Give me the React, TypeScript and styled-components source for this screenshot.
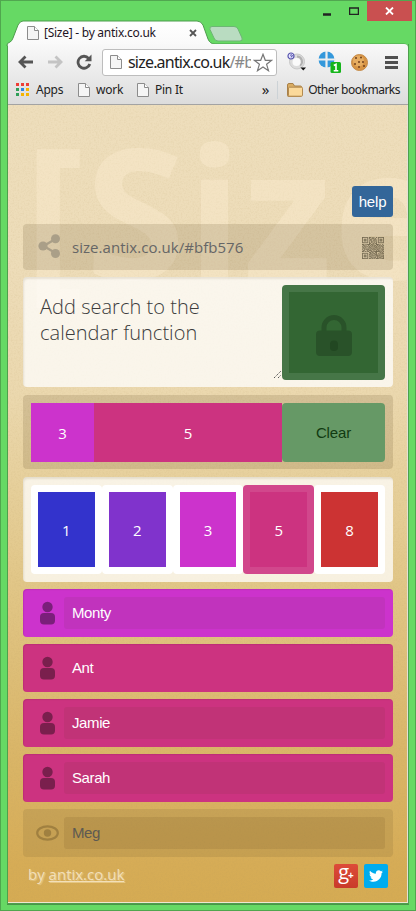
import React from "react";
import styled, { createGlobalStyle, css } from "styled-components";
import { FaTwitter } from "react-icons/fa";

const GlobalStyle = createGlobalStyle`
  * { box-sizing: border-box; }
  body { margin: 0; overflow: hidden; }
  svg { display: block; flex: none; }
`;

const openSans = `"Open Sans", "Noto Sans", sans-serif`;
const arial = `"Liberation Sans", Arial, sans-serif`;
const chromeFont = `"Noto Sans", "Open Sans", sans-serif`;

/* ---------- browser window ---------- */

const Window = styled.div`
  width: 416px;
  height: 911px;
  background: #66d964;
  border: 1px solid #50a64e;
  border-top-color: #51a750;
  display: flex;
  flex-direction: column;
  padding: 0 6px 6px;
  overflow: hidden;
`;

const TitleBar = styled.header`
  height: 43px;
  flex: none;
  display: flex;
  align-items: flex-start;
  position: relative;
`;

const TabShape = styled.svg`
  position: absolute;
  left: -1px;
  top: 17px;
`;

const TabContent = styled.div`
  position: relative;
  display: flex;
  align-items: center;
  width: 194px;
  height: 20px;
  margin: 22px 0 0 20px;
`;

const TabTitle = styled.span`
  font: 12px/20px ${chromeFont};
  letter-spacing: -0.26px;
  color: #1d1424;
  margin-left: 5px;
  flex: 1;
  white-space: nowrap;
`;

const TabClose = styled.span`
  width: 8px;
  margin-right: 24px;
`;

const WindowControls = styled.div`
  margin-left: auto;
  display: flex;
  margin-right: -3px;
`;

const ControlButton = styled.div<{ $width: number; $danger?: boolean }>`
  width: ${(p) => p.$width}px;
  height: 20px;
  display: grid;
  place-items: center;
  background: ${(p) => (p.$danger ? "#c95050" : "transparent")};
`;

const Frame = styled.div`
  width: 402px;
  flex: 1;
  min-height: 0;
  display: flex;
  flex-direction: column;
  border: 1px solid #4f9f4d;
  border-top: 0;
  box-shadow: 0 1px 0 #4a9548;
`;

const Toolbar = styled.div`
  height: 35px;
  flex: none;
  display: flex;
  align-items: center;
  background: linear-gradient(#f9f9f9, #e8e8e8);
  padding: 1px 9px 0 10px;
  border-radius: 0 4px 0 0;
  position: relative;
`;

const NavGroup = styled.div`
  display: flex;
  align-items: center;
  gap: 13px;
  width: 84px;
`;

const Omnibox = styled.div`
  width: 175px;
  height: 27px;
  background: #fff;
  border: 1px solid #bdbdbd;
  border-radius: 3px;
  display: flex;
  align-items: center;
  padding: 0 3px 0 7px;
`;

const Address = styled.div`
  flex: 1;
  width: 0;
  overflow: hidden;
  white-space: nowrap;
  margin-left: 6px;
  margin-right: 2px;
  font: 16px/24px ${chromeFont};
  letter-spacing: -0.8px;
  color: #222;
`;

const AddressRest = styled.span`
  color: #888;
`;

const Extensions = styled.div`
  display: flex;
  align-items: center;
  margin-left: 10px;
  gap: 12px;
`;

const CookieSlot = styled.div`
  margin-left: 9px;
`;

const MenuButton = styled.div`
  margin-left: auto;
  margin-right: 1px;
`;

const Bookmarks = styled.div`
  height: 26px;
  flex: none;
  display: flex;
  align-items: center;
  background: linear-gradient(#e8e8e8, #dcdcdc);
  border-bottom: 1px solid #a3a3a3;
  padding: 0 8px 3px 8px;
  font: 12px/18px ${chromeFont};
  letter-spacing: -0.25px;
  color: #222;
`;

const Bookmark = styled.div<{ $width: number }>`
  width: ${(p) => p.$width}px;
  display: flex;
  align-items: center;
  gap: 6px;
  white-space: nowrap;
`;

const Overflow = styled.span`
  font-size: 15px;
  line-height: 14px;
  margin-left: auto;
  margin-top: -3px;
  padding-right: 8px;
`;

const OtherBookmarks = styled.div`
  display: flex;
  align-items: center;
  gap: 5px;
  border-left: 1px solid #ccd2d6;
  padding-left: 9px;
  white-space: nowrap;
  letter-spacing: -0.5px;
`;

/* ---------- page ---------- */

const Page = styled.main`
  flex: 1;
  min-height: 0;
  position: relative;
  overflow: hidden;
  border-right: 1px solid #e4e0d8;
  border-bottom: 1px solid #efe6d0;
  padding: 81px 15px 0 15px;
  background: linear-gradient(#eedebc 0, #eddcb8 170px, #ebd8ae 290px, #e2c88b 460px, #dab669 640px, #d6ac56 760px, #d5ab53 100%);
`;

const Grain = styled.svg`
  position: absolute;
  inset: 0;
  width: 100%;
  height: 100%;
`;

const Watermark = styled.div`
  position: absolute;
  left: 16px;
  top: -21px;
  font: bold 182px/248px ${openSans};
  letter-spacing: 1.1px;
  color: rgba(255, 240, 214, 0.34);
  white-space: nowrap;
`;

const Stack = styled.div`
  position: relative;
  width: 370px;
  display: flex;
  flex-direction: column;
  gap: 7px;
`;

const HelpButton = styled.button`
  align-self: flex-end;
  width: 41px;
  height: 31px;
  border: 0;
  padding: 0;
  border-radius: 3px;
  background: #336699;
  color: #fff;
  font: 15px/31px ${arial};
  letter-spacing: -0.2px;
`;

const Panel = styled.section<{ $height: number; $light?: boolean; $spaced?: boolean }>`
  height: ${(p) => p.$height}px;
  margin-top: ${(p) => (p.$spaced ? 1 : 0)}px;
  display: flex;
  border-radius: 4px;
  padding: 8px;
  ${(p) =>
    p.$light
      ? css`
          background: rgba(255, 255, 255, 0.74);
          box-shadow: inset 1px 2px 2px rgba(90, 70, 30, 0.12);
        `
      : css`
          background: rgba(68, 51, 17, 0.14);
        `}
`;

const ShareGlyph = styled.div`
  width: 41px;
  padding: 2px 0 0 7px;
`;

const ShareLink = styled.div`
  flex: 1;
  font: 15px/30px ${openSans};
  letter-spacing: 0.04px;
  color: #666;
`;

const QrSlot = styled.div`
  padding: 5px 1px 0 0;
`;

const Story = styled.div`
  flex: 1;
  position: relative;
  margin-left: 9px;
  padding-top: 9px;
  font: 300 20px/26px ${openSans};
  letter-spacing: 0.03px;
  color: #3c3c3c;
  white-space: pre;
`;

const Grip = styled.svg`
  position: absolute;
  right: 0;
  bottom: 0;
`;

const LockButton = styled.button`
  width: 103px;
  height: 95px;
  margin-top: 0;
  padding: 0;
  border: 7px solid #467647;
  border-radius: 4px;
  background: #336633;
  display: grid;
  place-items: center;
`;

const LockSlot = styled.span`
  padding-top: 5px;
`;

const VoteBar = styled.div<{ $width: number; $color: string }>`
  width: ${(p) => p.$width}px;
  height: 59px;
  background: ${(p) => p.$color};
  color: #fff;
  text-align: center;
  font: 15px/60px ${openSans};
`;

const ClearButton = styled.button`
  width: 103px;
  height: 59px;
  padding: 0;
  border: 0;
  border-radius: 4px;
  background: #669966;
  color: #113b11;
  font: 15px/59px ${arial};
  letter-spacing: -0.15px;
`;

const Card = styled.button<{ $color: string; $selected?: boolean }>`
  width: 71px;
  height: 89px;
  padding: 0;
  border: 7px solid ${(p) => (p.$selected ? "#d1478c" : "#fff")};
  border-radius: 4px;
  background: ${(p) => p.$color};
  background-clip: padding-box;
  color: #fff;
  font: 15px/76px ${openSans};
`;

const Voter = styled.div<{ $color: string; $muted?: boolean }>`
  height: 48px;
  display: flex;
  align-items: center;
  padding: 8px 8px 8px 12px;
  border-radius: 4px;
  background: ${(p) => p.$color};
  box-shadow: ${(p) => (p.$muted ? "none" : "inset 1px 1px 1px rgba(80,0,60,.12)")};
`;

const VoterIcon = styled.div`
  width: 29px;
  display: flex;
  padding-left: 1px;
`;

const VoterName = styled.div<{ $shade?: boolean; $muted?: boolean }>`
  flex: 1;
  height: 32px;
  padding-left: 8px;
  border-radius: 3px;
  background: ${(p) => (!p.$shade ? "transparent" : p.$muted ? "rgba(85,51,17,.11)" : "rgba(51,51,0,.07)")};
  color: ${(p) => (p.$muted ? "#5d5a52" : "#fff")};
  font: 15px/32px ${arial};
  letter-spacing: -0.4px;
`;

const Footer = styled.footer`
  display: flex;
  align-items: center;
  height: 24px;
  padding: 0 5px;
  color: #f2dfb9;
  font: 15px/24px ${openSans};
  text-shadow: 1px 1px 1px rgba(255, 240, 200, 0.4);
`;

const Byline = styled.div`
  flex: 1;
  margin-top: -5px;
  a { color: inherit; text-decoration: underline; }
`;

const Social = styled.a<{ $color: string }>`
  width: 24px;
  height: 24px;
  margin-left: 6px;
  border-radius: 2px;
  background: ${(p) => p.$color};
  color: #fff;
  display: flex;
  align-items: center;
  justify-content: center;
  text-shadow: none;
`;

const GooglePlus = styled.span`
  display: flex;
  font: 20px/20px ${openSans};
  margin-top: -5px;
`;

const Plus = styled.span`
  font: bold 10px/20px ${openSans};
  margin: 3px 0 0 -1px;
`;

/* ---------- drawings ---------- */

const PageIcon = () => (
  <svg width="12" height="14" viewBox="0 0 12 14">
    <path d="M.5.5h7l4 4v9H.5z" fill="#f5f5f5" stroke="#8c8c8c" />
    <path d="M7.5.5v4h4" fill="#fff" stroke="#8c8c8c" />
  </svg>
);

const Arrow = ({ color, flip }: { color: string; flip?: boolean }) => (
  <svg width="16" height="14" viewBox="0 0 16 14">
    <path
      d="M7.5 1.5L2 7l5.500 5.500M2 7h13"
      transform={flip ? "translate(16 0) scale(-1 1)" : undefined}
      fill="none"
      stroke={color}
      strokeWidth="2.800"
    />
  </svg>
);

const Reload = () => (
  <svg width="16" height="16" viewBox="0 0 16 16">
    <path d="M12.600 4.300A6 6 0 1 0 13.800 10" fill="none" stroke="#555" strokeWidth="2.800" />
    <path d="M15.500 .5v6.800H8.700z" fill="#555" />
  </svg>
);

const Star = () => (
  <svg width="20" height="19" viewBox="0 0 20 19">
    <path
      d="M10 1.300l2.300 6h6.400l-5.100 4 1.900 6.400-5.500-3.800-5.500 3.800 1.900-6.400-5.100-4h6.400z"
      fill="#fff"
      stroke="#777"
      strokeWidth="1.200"
    />
  </svg>
);

const OrbExtension = () => (
  <svg width="19" height="20" viewBox="0 0 19 20">
    <circle cx="10" cy="9.500" r="7.500" fill="#dcdcdc" stroke="#c8c8c8" />
    <path d="M10 4.500a5 5 0 0 1 3 9" fill="none" stroke="#b2b2b2" strokeWidth="2" />
    <circle cx="9.500" cy="10" r="4" fill="#fafafa" />
    <circle cx="4" cy="4" r="3" fill="#e9e9ff" stroke="#5552ad" strokeWidth="1.200" />
    <path d="M3 3.500q1.200-1.500 2.200-.3T4.200 4.500v1" fill="none" stroke="#4441a5" strokeWidth=".9" />
    <path d="M13.500 15.500h5.500l-2.750 3z" fill="#111" />
  </svg>
);

const TargetExtension = () => (
  <svg width="24" height="24" viewBox="0 0 24 24">
    <circle cx="8.500" cy="9.500" r="8" fill="#3498db" />
    <path d="M8.500 1v18M0 9.500h18" stroke="#eee" strokeWidth="2.200" />
    <rect x="12.500" y="12" width="10.500" height="11" rx="1.500" fill="#16b51b" />
    <path d="M15.800 15.500l2.200-1.200v6.400M15.700 20.700h4.600" fill="none" stroke="#fff" strokeWidth="1.600" />
  </svg>
);

const Cookie = () => (
  <svg width="17" height="17" viewBox="0 0 17 17">
    <circle cx="8.500" cy="8.500" r="8" fill="#d89545" stroke="#c58a48" />
    <circle cx="7.500" cy="7" r="5.500" fill="#e6ad61" />
    {[[5, 4], [10, 3.500], [8, 8], [4, 10], [12, 8], [8, 13], [13, 12]].map(([x, y]) => (
      <circle key={`${x}-${y}`} cx={x} cy={y} r="1" fill="#71411d" />
    ))}
  </svg>
);

const MenuIcon = () => (
  <svg width="13" height="13" viewBox="0 0 13 13">
    <path d="M0 1.500h13M0 6.500h13M0 11.500h13" stroke="#505050" strokeWidth="2.800" />
  </svg>
);

const appColors = ["#ee3e36", "#ee3e36", "#ee3e36", "#2f9e58", "#2d87e2", "#f5b400", "#2f9e58", "#f5b400", "#f5b400"];

const AppsIcon = () => (
  <svg width="14" height="14" viewBox="0 0 14 14">
    {appColors.map((c, i) => (
      <rect key={i} x={(i % 3) * 5} y={Math.floor(i / 3) * 5} width="3" height="3" fill={c} />
    ))}
  </svg>
);

const Folder = () => (
  <svg width="16" height="14" viewBox="0 0 16 14">
    <path d="M.5 12.500V2q0-1.500 1.500-1.500h4L7.500 3h6q1 0 1 1v8.500q0 1-1 1h-12q-1 0-1-1z" fill="#d9ac62" stroke="#a98048" />
    <path d="M1.500 5q0-.8 1-.8h12q1 0 1 1v7q0 1-1 1h-12q-1 0-1-1z" fill="#fbd99a" stroke="#b28a50" />
  </svg>
);

const ShareIcon = () => (
  <svg width="24" height="24" viewBox="0 0 24 24">
    <g fill="#aa9f88">
      <path d="M18 4.800L5.500 12 18 19.200" fill="none" stroke="#aa9f88" strokeWidth="2.400" />
      <circle cx="5" cy="12" r="4.600" />
      <circle cx="17.500" cy="4.800" r="4.500" />
      <circle cx="17.500" cy="19.500" r="4.500" />
    </g>
  </svg>
);

const qrRows = [
  "1111111011010100101111111",
  "1000001010011101001000001",
  "1011101001101011001011101",
  "1011101011100110101011101",
  "1011101000101101001011101",
  "1000001010110010101000001",
  "1111111010101010101111111",
  "0000000011001101100000000",
  "1101011110110100111010010",
  "0110100101011011010110101",
  "1011011010110110101101110",
  "0101100111001011110010011",
  "1110101001110101001111010",
  "0011010110101110110100101",
  "1010111101011011011010111",
  "0110001011100100101101010",
  "1101101100110111111110101",
  "0000000011011001100011010",
  "1111111001101110101010111",
  "1000001011010011100010100",
  "1011101010111101111110011",
  "1011101001010110110101101",
  "1011101011101001011010111",
  "1000001000110111010111001",
  "1111111011011010111010111",
];

const QrCode = () => (
  <svg width="22" height="22" viewBox="0 0 25 25">
    {qrRows.map((row, y) =>
      row.split("").map((bit, x) =>
        bit === "1" ? <rect key={`${x}-${y}`} x={x} y={y} width="1.050" height="1.050" fill="#6a6049" /> : null
      )
    )}
  </svg>
);

const LockIcon = () => (
  <svg width="36" height="41" viewBox="0 0 36 41">
    <path d="M8 17v-4.500a10 10 0 0 1 20 0V17" fill="none" stroke="#295229" strokeWidth="5" />
    <rect x="0" y="15.500" width="36" height="25.500" rx="4" fill="#295229" />
    <rect x="14" y="25.500" width="8" height="10.500" rx="3.800" fill="#224722" />
  </svg>
);

const PersonIcon = ({ color }: { color: string }) => (
  <svg width="23" height="24" viewBox="0 0 23 24">
    <circle cx="11.500" cy="6" r="5.200" fill={color} />
    <rect x="4" y="12" width="15" height="11.500" rx="4" fill={color} />
  </svg>
);

const EyeIcon = () => (
  <svg width="24" height="16" viewBox="0 0 24 16">
    <ellipse cx="11.500" cy="8" rx="10.300" ry="6.700" fill="none" stroke="#a08040" strokeWidth="2.200" />
    <circle cx="11.500" cy="8" r="3.700" fill="#a08040" />
  </svg>
);

/* ---------- data ---------- */

const cards = [
  { value: 1, color: "#3333cc" },
  { value: 2, color: "#8033cc" },
  { value: 3, color: "#cc33cc" },
  { value: 5, color: "#cc3380", selected: true },
  { value: 8, color: "#cc3333" },
];

const voters = [
  { name: "Monty", color: "#cc33cc", icon: "#7a1f7a", shade: true },
  { name: "Ant", color: "#cc3380", icon: "#7a1f4d", shade: false },
  { name: "Jamie", color: "#cc3380", icon: "#7a1f4d", shade: true },
  { name: "Sarah", color: "#cc3380", icon: "#7a1f4d", shade: true },
];

export default function App() {
  return (
    <>
      <GlobalStyle />
      <Window>
        <TitleBar>
          <TabShape width="402" height="28" viewBox="0 0 402 28">
            <defs>
              <linearGradient id="tab" x1="0" y1="0" x2="0" y2="1">
                <stop offset="0" stopColor="#fff" />
                <stop offset="1" stopColor="#f9f9f9" />
              </linearGradient>
            </defs>
            <path d="M206 8.500h22q3 0 4 2.500l4 9q1 3-2 3h-22q-3 0-4-3l-4-8.500q-1-3 2-3z" fill="#b9dcc1" stroke="#6db674" />
            <path d="M1 28v-1q0-2 3-3 2-1 3-4l5-13q2-4 5-4h174q4 0 6 4l5 14q2 5 7 5h189q3 0 3 2z" fill="url(#tab)" stroke="#4d9c4c" />
          </TabShape>
          <TabContent>
            <PageIcon />
            <TabTitle>[Size] - by antix.co.uk</TabTitle>
            <TabClose>
              <svg width="8" height="8" viewBox="0 0 8 8">
                <path d="M1 1l6 6M7 1L1 7" stroke="#555" strokeWidth="1.800" />
              </svg>
            </TabClose>
          </TabContent>
          <WindowControls>
            <ControlButton $width={27}>
              <svg width="8" height="12" viewBox="0 0 8 12">
                <path d="M0 9.500h8" stroke="#222" strokeWidth="2.500" />
              </svg>
            </ControlButton>
            <ControlButton $width={27}>
              <svg width="10" height="8" viewBox="0 0 10 8">
                <path d="M.5.500v7h9V.5M0 1h10" fill="none" stroke="#222" strokeWidth="1.500" />
              </svg>
            </ControlButton>
            <ControlButton $width={45} $danger>
              <svg width="9" height="8" viewBox="0 0 9 8">
                <path d="M1 .5l7 7M8 .5l-7 7" stroke="#fff" strokeWidth="1.800" />
              </svg>
            </ControlButton>
          </WindowControls>
        </TitleBar>
        <Frame>
          <Toolbar>
            <NavGroup>
              <Arrow color="#555" />
              <Arrow color="#c4c4c4" flip />
              <Reload />
            </NavGroup>
            <Omnibox>
              <PageIcon />
              <Address>
                size.antix.co.uk<AddressRest>/#bfb576</AddressRest>
              </Address>
              <Star />
            </Omnibox>
            <Extensions>
              <OrbExtension />
              <TargetExtension />
            </Extensions>
            <CookieSlot>
              <Cookie />
            </CookieSlot>
            <MenuButton>
              <MenuIcon />
            </MenuButton>
          </Toolbar>
          <Bookmarks>
            <Bookmark $width={62}><AppsIcon />Apps</Bookmark>
            <Bookmark $width={59}><PageIcon />work</Bookmark>
            <Bookmark $width={60}><PageIcon />Pin It</Bookmark>
            <Overflow>»</Overflow>
            <OtherBookmarks><Folder />Other bookmarks</OtherBookmarks>
          </Bookmarks>
          <Page>
            <Grain>
              <filter id="grain" x="0" y="0" width="100%" height="100%">
                <feTurbulence type="fractalNoise" baseFrequency="0.6" numOctaves="3" seed="4" />
                <feColorMatrix values="0 0 0 0 .45  0 0 0 0 .32  0 0 0 0 .12  .9 0 0 0 -.38" />
              </filter>
              <rect width="100%" height="100%" filter="url(#grain)" opacity="0.28" />
            </Grain>
            <Watermark>[Size]</Watermark>
            <Stack>
              <HelpButton>help</HelpButton>
              <Panel $height={46}>
                <ShareGlyph><ShareIcon /></ShareGlyph>
                <ShareLink>size.antix.co.uk/#bfb576</ShareLink>
                <QrSlot><QrCode /></QrSlot>
              </Panel>
              <Panel $height={110} $light>
                <Story>
                  {"Add search to the\ncalendar function"}
                  <Grip width="9" height="9" viewBox="0 0 9 9">
                    <path d="M1 8l7-7M5 8l3-3" stroke="#555" strokeDasharray="1.400 .8" />
                  </Grip>
                </Story>
                <LockButton aria-label="Lock"><LockSlot><LockIcon /></LockSlot></LockButton>
              </Panel>
              <Panel $height={74} $spaced>
                <VoteBar $width={63} $color="#cc33cc">3</VoteBar>
                <VoteBar $width={188} $color="#cc3380">5</VoteBar>
                <ClearButton>Clear</ClearButton>
              </Panel>
              <Panel $height={105} $light $spaced>
                {cards.map((c) => (
                  <Card key={c.value} $color={c.color} $selected={c.selected}>{c.value}</Card>
                ))}
              </Panel>
              {voters.map((v) => (
                <Voter key={v.name} $color={v.color}>
                  <VoterIcon><PersonIcon color={v.icon} /></VoterIcon>
                  <VoterName $shade={v.shade}>{v.name}</VoterName>
                </Voter>
              ))}
              <Voter $color="rgba(85,68,34,.12)" $muted>
                <VoterIcon><EyeIcon /></VoterIcon>
                <VoterName $shade $muted>Meg</VoterName>
              </Voter>
              <Footer>
                <Byline>by <a>antix.co.uk</a></Byline>
                <Social $color="linear-gradient(#dd4b39, #c93a2a)">
                  <GooglePlus>g<Plus>+</Plus></GooglePlus>
                </Social>
                <Social $color="#00acee"><FaTwitter size={14} /></Social>
              </Footer>
            </Stack>
          </Page>
        </Frame>
      </Window>
    </>
  );
}
